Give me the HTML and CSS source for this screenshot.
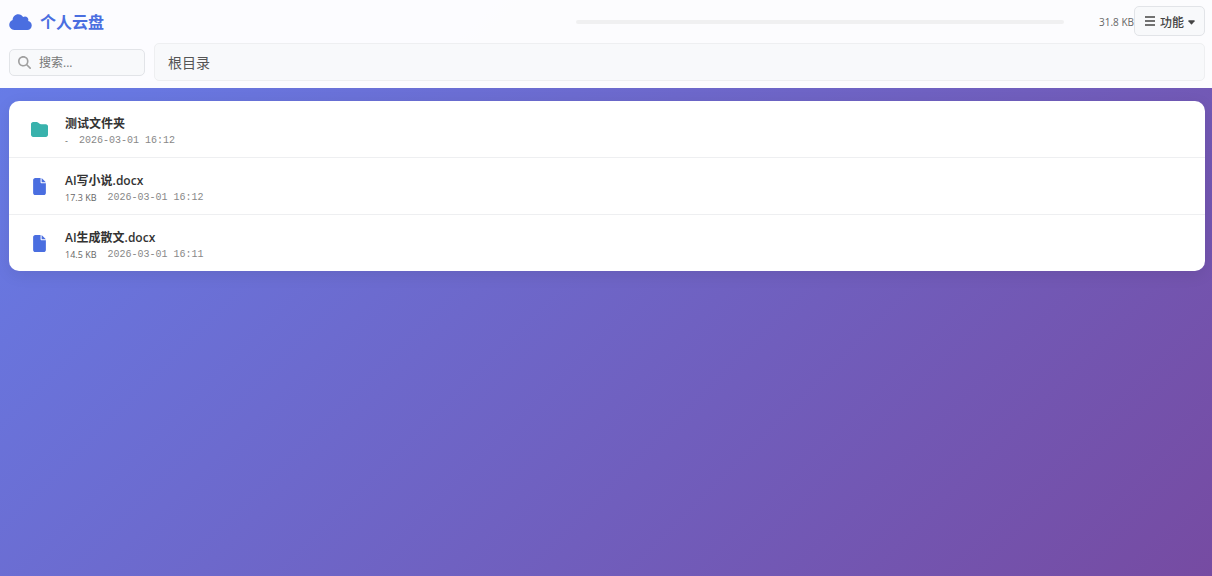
FILE: index.html
```html
<!DOCTYPE html>
<html lang="zh-CN">
<head>
    <meta charset="UTF-8">
    <meta name="viewport" content="width=device-width, initial-scale=1.0">
    <title>个人云盘</title>
    <link rel="stylesheet" href="styles.css">
</head>
<body>
    <header class="header">
        <div class="header-top">
            <h1 class="brand">
                <svg class="brand-icon" viewBox="0 0 640 512" aria-hidden="true"><path d="M0 336c0 79.500 64.500 144 144 144l368 0c70.700 0 128-57.300 128-128 0-61.900-44-113.600-102.400-125.400 4.100-10.700 6.400-22.400 6.400-34.600 0-53-43-96-96-96-19.700 0-38.100 6-53.300 16.200C367 64.200 315.300 32 256 32c-88.400 0-160 71.600-160 160 0 2.700.1 5.400.2 8.100C40.200 219.800 0 273.200 0 336z"/></svg>
                <span>个人云盘</span>
            </h1>
            <div class="storage">
                <div class="storage-bar"></div>
                <span class="storage-text">31.8 KB</span>
            </div>
            <button class="menu-btn" type="button">
                <svg class="menu-icon" viewBox="0 0 12 12" aria-hidden="true"><path d="M1 1h10M1 5h10M1 9h10"/></svg>
                <span>功能</span>
                <svg class="caret" viewBox="0 0 8 5" aria-hidden="true"><path d="M1 0h6q1 0 .5 1L4.500 4.500q-.5.5-1 0L.5 1Q0 0 1 0z"/></svg>
            </button>
        </div>
        <div class="header-bottom">
            <label class="search" for="searchInput">
                <svg class="search-icon" viewBox="0 0 512 512" aria-hidden="true"><path d="M416 208c0 45.900-14.900 88.300-40 122.700L502.600 457.400c12.500 12.500 12.500 32.800 0 45.300s-32.800 12.500-45.300 0L330.700 376C296.300 401.100 253.900 416 208 416 93.100 416 0 322.900 0 208S93.100 0 208 0s208 93.100 208 208zM208 352a144 144 0 1 0 0-288 144 144 0 1 0 0 288z"/></svg>
                <input type="text" id="searchInput" placeholder="搜索..." aria-label="搜索">
            </label>
            <nav class="breadcrumb"><a href="#">根目录</a></nav>
        </div>
    </header>

    <main class="content">
        <ul class="file-list">
            <li class="file-item">
                <span class="file-icon folder">
                    <svg viewBox="0 0 512 448" aria-hidden="true"><path d="M64 448h384c35 0 64-29 64-64V128c0-35-29-64-64-64H298c-14 0-27-4-38-13l-39-29C203 8 186 0 168 0H64C29 0 0 29 0 64v320c0 35 29 64 64 64z"/></svg>
                </span>
                <div class="file-info">
                    <div class="file-name">测试文件夹</div>
                    <div class="file-meta"><span>-</span><time>2026-03-01 16:12</time></div>
                </div>
            </li>
            <li class="file-item">
                <span class="file-icon document">
                    <svg viewBox="0 0 384 512" aria-hidden="true"><path d="M0 64C0 29 29 0 64 0h160v128c0 18 14 32 32 32h128v288c0 35-29 64-64 64H64c-35 0-64-29-64-64zM384 128H256V0z"/></svg>
                </span>
                <div class="file-info">
                    <div class="file-name">AI写小说.docx</div>
                    <div class="file-meta"><span>17.3 KB</span><time>2026-03-01 16:12</time></div>
                </div>
            </li>
            <li class="file-item">
                <span class="file-icon document">
                    <svg viewBox="0 0 384 512" aria-hidden="true"><path d="M0 64C0 29 29 0 64 0h160v128c0 18 14 32 32 32h128v288c0 35-29 64-64 64H64c-35 0-64-29-64-64zM384 128H256V0z"/></svg>
                </span>
                <div class="file-info">
                    <div class="file-name">AI生成散文.docx</div>
                    <div class="file-meta"><span>14.5 KB</span><time>2026-03-01 16:11</time></div>
                </div>
            </li>
        </ul>
    </main>
</body>
</html>
```
FILE: styles.css
```css
:root {
    --primary: #4a6ee0;
    --folder: #38b2ac;
    --panel: #f8f9fb;
    --border: #e2e4e8;
    --line: #eeeff1;
    --text: #333;
    --muted: #666;
}

* {
    box-sizing: border-box;
}

body {
    margin: 0;
    min-height: 100vh;
    font-family: "Open Sans", "Noto Sans CJK SC", sans-serif;
    color: var(--text);
    background: linear-gradient(135deg, #667eea 0%, #764ba2 100%);
}

svg {
    display: block;
    fill: currentColor;
}

.header {
    padding: 6px 7px 7px 9px;
    background: rgba(255, 255, 255, 0.98);
}

.header-top {
    display: flex;
    align-items: center;
    height: 32px;
    margin-bottom: 5px;
}

.brand,
.storage {
    flex: 1;
}

.brand {
    display: flex;
    align-items: center;
    gap: 8px;
    margin: 0 8px 0 0;
    font-size: 16px;
    line-height: 24px;
    color: var(--primary);
}

.brand-icon {
    width: 23px;
    height: 18px;
}

.storage {
    display: flex;
    align-items: center;
    gap: 10px;
}

.storage-bar {
    flex: 1;
    height: 4px;
    border-radius: 2px;
    background: #f0f0f1;
}

.storage-text {
    width: 60px;
    text-align: right;
    font-size: 10px;
    color: var(--muted);
}

.menu-btn {
    display: flex;
    align-items: center;
    align-self: flex-start;
    justify-content: center;
    gap: 4px;
    width: 71px;
    height: 30px;
    padding: 2px 0 0;
    border: 1px solid var(--border);
    border-radius: 5px;
    background: var(--panel);
    font-family: inherit;
    font-size: 12px;
    font-weight: 500;
    color: #444;
    cursor: pointer;
}

.menu-icon {
    width: 12px;
    height: 12px;
    stroke: currentColor;
    stroke-width: 1.5;
}

.caret {
    width: 7px;
    height: 5px;
}

.header-bottom {
    display: flex;
    align-items: center;
    gap: 9px;
}

.search {
    display: flex;
    align-items: center;
    gap: 8px;
    width: 136px;
    height: 27px;
    padding: 0 8px;
    border: 1px solid var(--border);
    border-radius: 5px;
    background: var(--panel);
}

.search-icon {
    flex: none;
    width: 13px;
    height: 13px;
    color: #a0a0a0;
}

.search input {
    min-width: 0;
    flex: 1;
    padding: 0;
    border: none;
    outline: none;
    background: none;
    font-family: inherit;
    font-size: 12px;
}

.search input::placeholder {
    color: #777;
}

.breadcrumb {
    flex: 1;
    padding: 7px 13px 5px;
    border: 1px solid var(--line);
    border-radius: 5px;
    background: var(--panel);
    font-size: 14px;
    line-height: 24px;
}

.breadcrumb a {
    color: #555;
    text-decoration: none;
}

.content {
    padding: 13px 7px 13px 9px;
}

.file-list {
    margin: 0;
    padding: 0;
    list-style: none;
    overflow: hidden;
    border-radius: 10px;
    background: #fff;
    box-shadow: 0 4px 16px rgba(0, 0, 0, 0.08);
}

.file-item {
    display: flex;
    align-items: center;
    gap: 9px;
    padding: 9px 13px;
    border-bottom: 1px solid var(--line);
}

.file-item:last-child {
    border-bottom: none;
}

.file-icon {
    display: flex;
    justify-content: center;
    width: 34px;
}

.folder {
    color: var(--folder);
}

.folder svg {
    width: 17px;
    height: 15px;
}

.document {
    color: var(--primary);
}

.document svg {
    width: 13px;
    height: 17px;
}

.file-info {
    padding-top: 4px;
}

.file-name {
    font-size: 12px;
    font-weight: 600;
    line-height: 20px;
}

.file-meta {
    display: flex;
    gap: 11px;
    font-size: 9px;
    line-height: 14px;
    color: var(--muted);
}

.file-meta time {
    font-family: "Liberation Mono", monospace;
    font-size: 10px;
    color: #888;
}
```
